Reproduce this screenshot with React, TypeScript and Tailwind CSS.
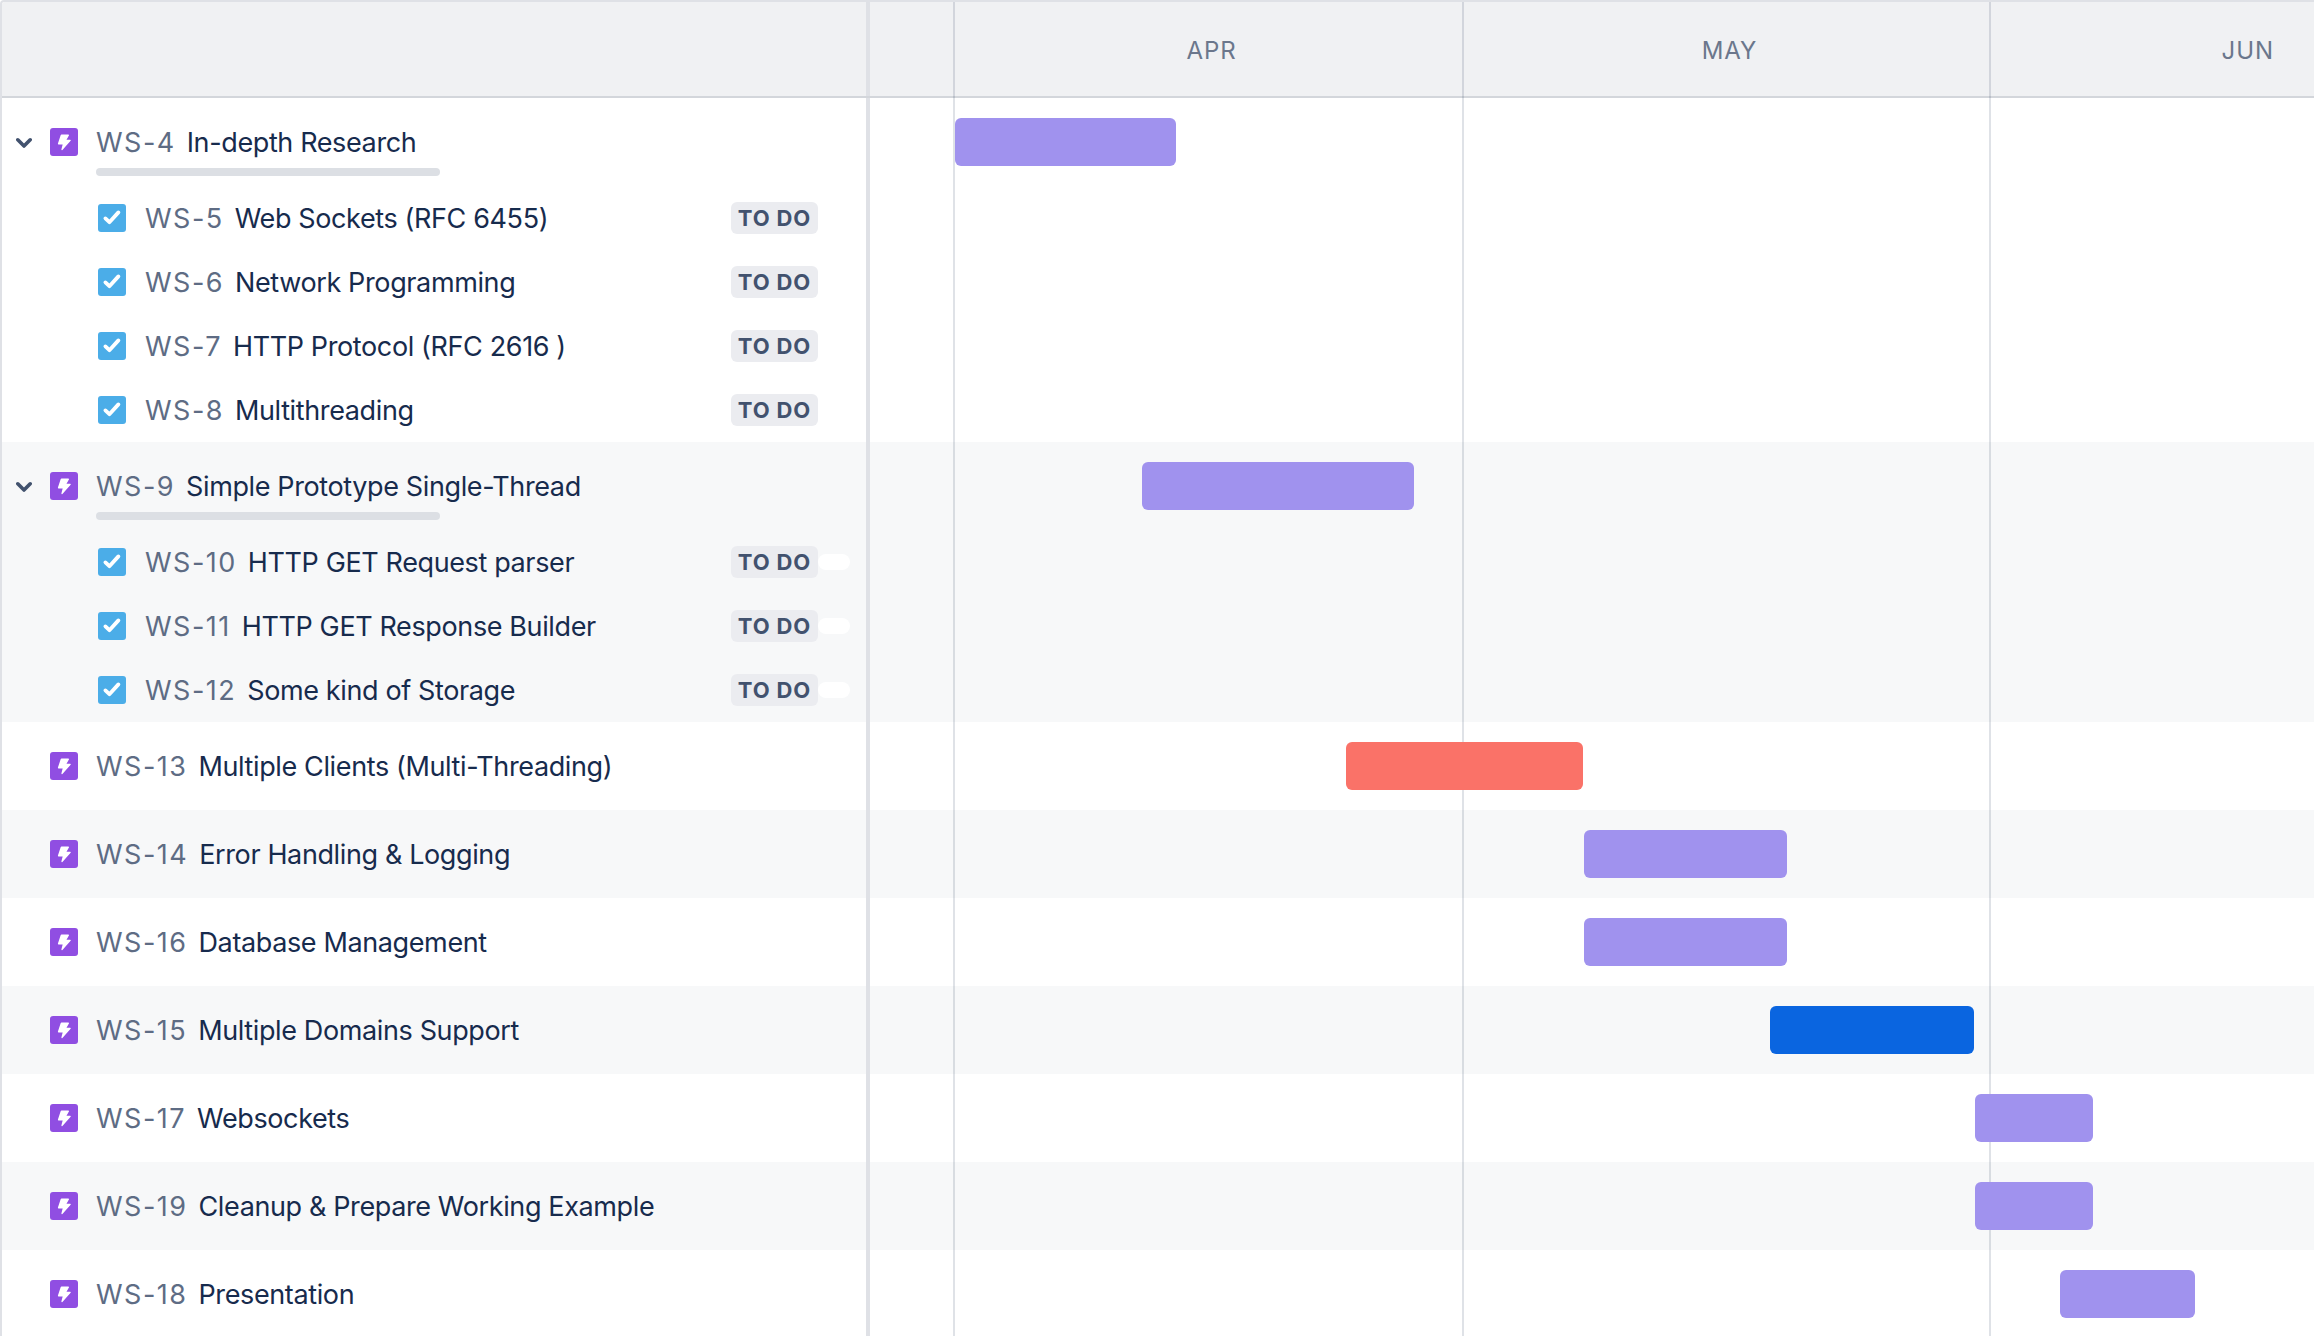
const KEY = "text-[#5e6c84] tracking-[0.055em]";

type BarT = { left: number; width: number; color: string };

function Bolt() {
  return (
    <div className="flex h-[28px] w-[28px] shrink-0 items-center justify-center rounded-[3px] bg-[#904ee2]">
      <svg width="28" height="28" viewBox="0 0 28 28">
        <path d="M11.4 7.2h6.9l-3 5.2h4.8l-8 9 1.5-5.6H8.6z" fill="#fff" stroke="#fff" strokeWidth="1.4" strokeLinejoin="round" />
      </svg>
    </div>
  );
}

function Check() {
  return (
    <div className="flex h-[28px] w-[28px] shrink-0 items-center justify-center rounded-[3px] bg-[#4bade8]">
      <svg width="28" height="28" viewBox="0 0 28 28">
        <path d="M7.4 14.4l4 3.8L20.4 8.4" fill="none" stroke="#fff" strokeWidth="3.8" strokeLinecap="round" strokeLinejoin="round" />
      </svg>
    </div>
  );
}

function Chevron() {
  return (
    <svg width="16" height="12" viewBox="0 0 16 12" className="shrink-0">
      <path d="M1.8 3.8L8 10l6.2-6.2" fill="none" stroke="#42526e" strokeWidth="3.6" strokeLinecap="round" strokeLinejoin="round" />
    </svg>
  );
}

function Bar({ bar }: { bar: BarT }) {
  return (
    <div
      className="relative z-10 h-[48px] rounded-[6px]"
      style={{ marginLeft: bar.left, width: bar.width, backgroundColor: bar.color }}
    />
  );
}

function Title({ id, title }: { id: string; title: string }) {
  return (
    <div className="flex whitespace-nowrap text-[27px] leading-[36px]">
      <span className={KEY}>{id}</span>
      <span className="ml-[11px] tracking-[-0.014em] text-[#172b4d]">{title}</span>
    </div>
  );
}

function ParentRow(p: { id: string; title: string; bar: BarT; expand?: boolean; grey?: boolean }) {
  return (
    <div className={`flex h-[88px] ${p.grey ? "bg-[#f7f8f9]" : "bg-white"}`}>
      <div className="flex w-[868px] shrink-0 border-r-4 border-[#dfe1e6]">
        <div className="flex w-[48px] items-center pl-[14px]">{p.expand && <Chevron />}</div>
        <div className="flex items-center">
          <Bolt />
        </div>
        <div className="ml-[18px] flex flex-col pt-[27px]">
          <Title id={p.id} title={p.title} />
          {p.expand && <div className="mt-[7px] h-[8px] w-[344px] rounded-full bg-[#dcdfe4]" />}
        </div>
      </div>
      <div className="flex flex-1 items-center">
        <Bar bar={p.bar} />
      </div>
    </div>
  );
}

function ChildRow(p: { id: string; title: string; grey?: boolean }) {
  return (
    <div className={`flex h-[64px] ${p.grey ? "bg-[#f7f8f9]" : "bg-white"}`}>
      <div className="flex w-[868px] shrink-0 items-center border-r-4 border-[#dfe1e6] pl-[96px]">
        <Check />
        <div className="ml-[19px] flex-1 pt-[2px]">
          <Title id={p.id} title={p.title} />
        </div>
        <div className="flex h-[32px] w-[87px] items-center justify-center rounded-[6px] bg-[#ebecf0] pt-[1px] text-[22px] font-bold tracking-[0.04em] text-[#42526e]">
          TO DO
        </div>
        <div className="mr-[16px] h-[16px] w-[32px] rounded-full bg-white" />
      </div>
      <div className="flex-1" />
    </div>
  );
}

const P = "#a092ee";

const flat: { id: string; title: string; bar: BarT; grey: boolean }[] = [
  { id: "WS-13", title: "Multiple Clients (Multi-Threading)", bar: { left: 476, width: 237, color: "#fa7268" }, grey: false },
  { id: "WS-14", title: "Error Handling & Logging", bar: { left: 714, width: 203, color: P }, grey: true },
  { id: "WS-16", title: "Database Management", bar: { left: 714, width: 203, color: P }, grey: false },
  { id: "WS-15", title: "Multiple Domains Support", bar: { left: 900, width: 204, color: "#0a65e0" }, grey: true },
  { id: "WS-17", title: "Websockets", bar: { left: 1105, width: 118, color: P }, grey: false },
  { id: "WS-19", title: "Cleanup & Prepare Working Example", bar: { left: 1105, width: 118, color: P }, grey: true },
  { id: "WS-18", title: "Presentation", bar: { left: 1190, width: 135, color: P }, grey: false },
];

function Month({ name, className }: { name: string; className: string }) {
  return <div className={`flex items-center justify-center ${className}`}>{name}</div>;
}

export default function App() {
  return (
    <div className="relative h-[1336px] w-[2314px] overflow-hidden rounded-tl-[4px] border-l-2 border-t-2 border-[#dfe1e6] bg-white font-['Inter',sans-serif]">
      <div className="flex h-[96px] border-b-2 border-[#d3d6db] bg-[#f0f1f3]">
        <div className="w-[868px] shrink-0 border-r-4 border-[#dfe1e6]" />
        <div className="flex flex-1 pt-[3px] text-[24px] tracking-[0.04em] text-[#6b778c]">
          <div className="w-[87px] shrink-0" />
          <Month name="APR" className="w-[509px] shrink-0" />
          <Month name="MAY" className="w-[527px] shrink-0" />
          <div className="flex flex-1 items-center justify-end pr-[40px]">JUN</div>
        </div>
      </div>

      <ParentRow id="WS-4" title="In-depth Research" expand bar={{ left: 85, width: 221, color: P }} />
      <ChildRow id="WS-5" title="Web Sockets (RFC 6455)" />
      <ChildRow id="WS-6" title="Network Programming" />
      <ChildRow id="WS-7" title="HTTP Protocol (RFC 2616 )" />
      <ChildRow id="WS-8" title="Multithreading" />

      <ParentRow id="WS-9" title="Simple Prototype Single-Thread" expand grey bar={{ left: 272, width: 272, color: P }} />
      <ChildRow id="WS-10" title="HTTP GET Request parser" grey />
      <ChildRow id="WS-11" title="HTTP GET Response Builder" grey />
      <ChildRow id="WS-12" title="Some kind of Storage" grey />

      {flat.map((r) => (
        <ParentRow key={r.id} id={r.id} title={r.title} bar={r.bar} grey={r.grey} />
      ))}

      <div className="absolute bottom-0 left-[951px] top-0 w-[2px] bg-[#091e42]/[0.13]" />
      <div className="absolute bottom-0 left-[1460px] top-0 w-[2px] bg-[#091e42]/[0.13]" />
      <div className="absolute bottom-0 left-[1987px] top-0 w-[2px] bg-[#091e42]/[0.13]" />
    </div>
  );
}
